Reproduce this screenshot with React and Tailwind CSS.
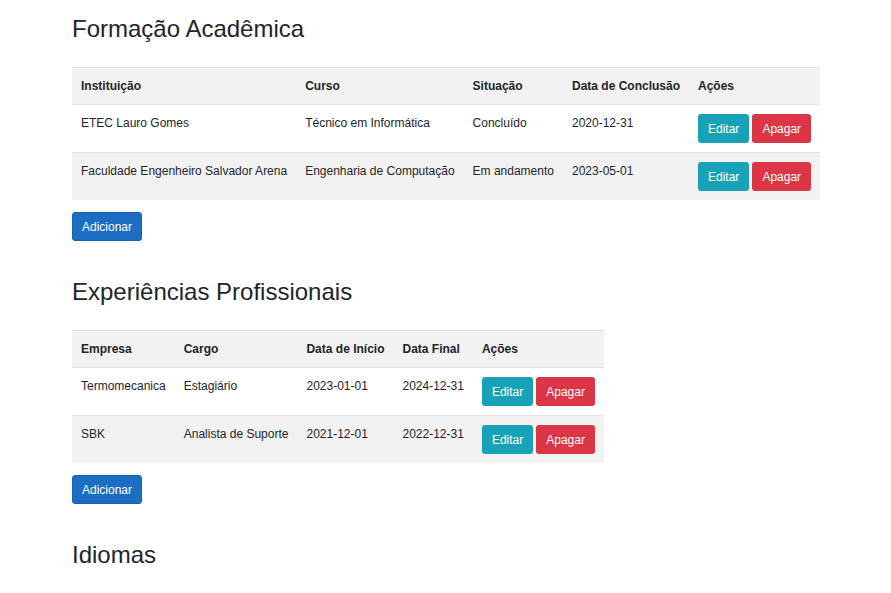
import React from "react";

function Btn({ color, children }) {
  return (
    <button
      className={`${color} text-white text-[12px] leading-[18px] px-[9px] py-[4.5px] border border-transparent rounded-[3px]`}
    >
      {children}
    </button>
  );
}

function Table({ headers, rows }) {
  return (
    <table className="border-collapse text-[12px] leading-[18px] text-[#212529]">
      <thead>
        <tr className="bg-[#f2f2f2]">
          {headers.map((h) => (
            <th
              key={h}
              className="text-left font-bold p-[9px] border-t border-[#dee2e6] align-top whitespace-nowrap"
            >
              {h}
            </th>
          ))}
        </tr>
      </thead>
      <tbody>
        {rows.map((r, i) => (
          <tr key={i} className={i % 2 === 1 ? "bg-[#f2f2f2]" : "bg-white"}>
            {r.map((c, j) => (
              <td
                key={j}
                className="p-[9px] border-t border-[#dee2e6] align-top whitespace-nowrap"
              >
                {c}
              </td>
            ))}
            <td className="p-[9px] border-t border-[#dee2e6] align-top whitespace-nowrap">
              <div className="flex gap-[3px]">
                <Btn color="bg-[#17a2b8]">Editar</Btn>
                <Btn color="bg-[#dc3545]">Apagar</Btn>
              </div>
            </td>
          </tr>
        ))}
      </tbody>
    </table>
  );
}

function Add() {
  return (
    <div className="mt-[12px]">
      <button className="bg-[#1b6ec2] border border-[#1861ac] text-white text-[12px] leading-[18px] px-[9px] py-[4.5px] rounded-[3px]">
        Adicionar
      </button>
    </div>
  );
}

export default function App() {
  return (
    <div
      className="min-h-[593px] bg-white text-[#212529] pl-[72px] pt-[14px]"
      style={{ fontFamily: '"Liberation Sans", Arial, sans-serif' }}
    >
      <h2 className="text-[24px] leading-[29px] font-normal mb-[24px]">
        Formação Acadêmica
      </h2>
      <Table
        headers={["Instituição", "Curso", "Situação", "Data de Conclusão", "Ações"]}
        rows={[
          ["ETEC Lauro Gomes", "Técnico em Informática", "Concluído", "2020-12-31"],
          [
            "Faculdade Engenheiro Salvador Arena",
            "Engenharia de Computação",
            "Em andamento",
            "2023-05-01",
          ],
        ]}
      />
      <Add />
      <h2 className="text-[24px] leading-[29px] font-normal mt-[36px] mb-[24px]">
        Experiências Profissionais
      </h2>
      <Table
        headers={["Empresa", "Cargo", "Data de Início", "Data Final", "Ações"]}
        rows={[
          ["Termomecanica", "Estagiário", "2023-01-01", "2024-12-31"],
          ["SBK", "Analista de Suporte", "2021-12-01", "2022-12-31"],
        ]}
      />
      <Add />
      <h2 className="text-[24px] leading-[29px] font-normal mt-[36px]">Idiomas</h2>
    </div>
  );
}
